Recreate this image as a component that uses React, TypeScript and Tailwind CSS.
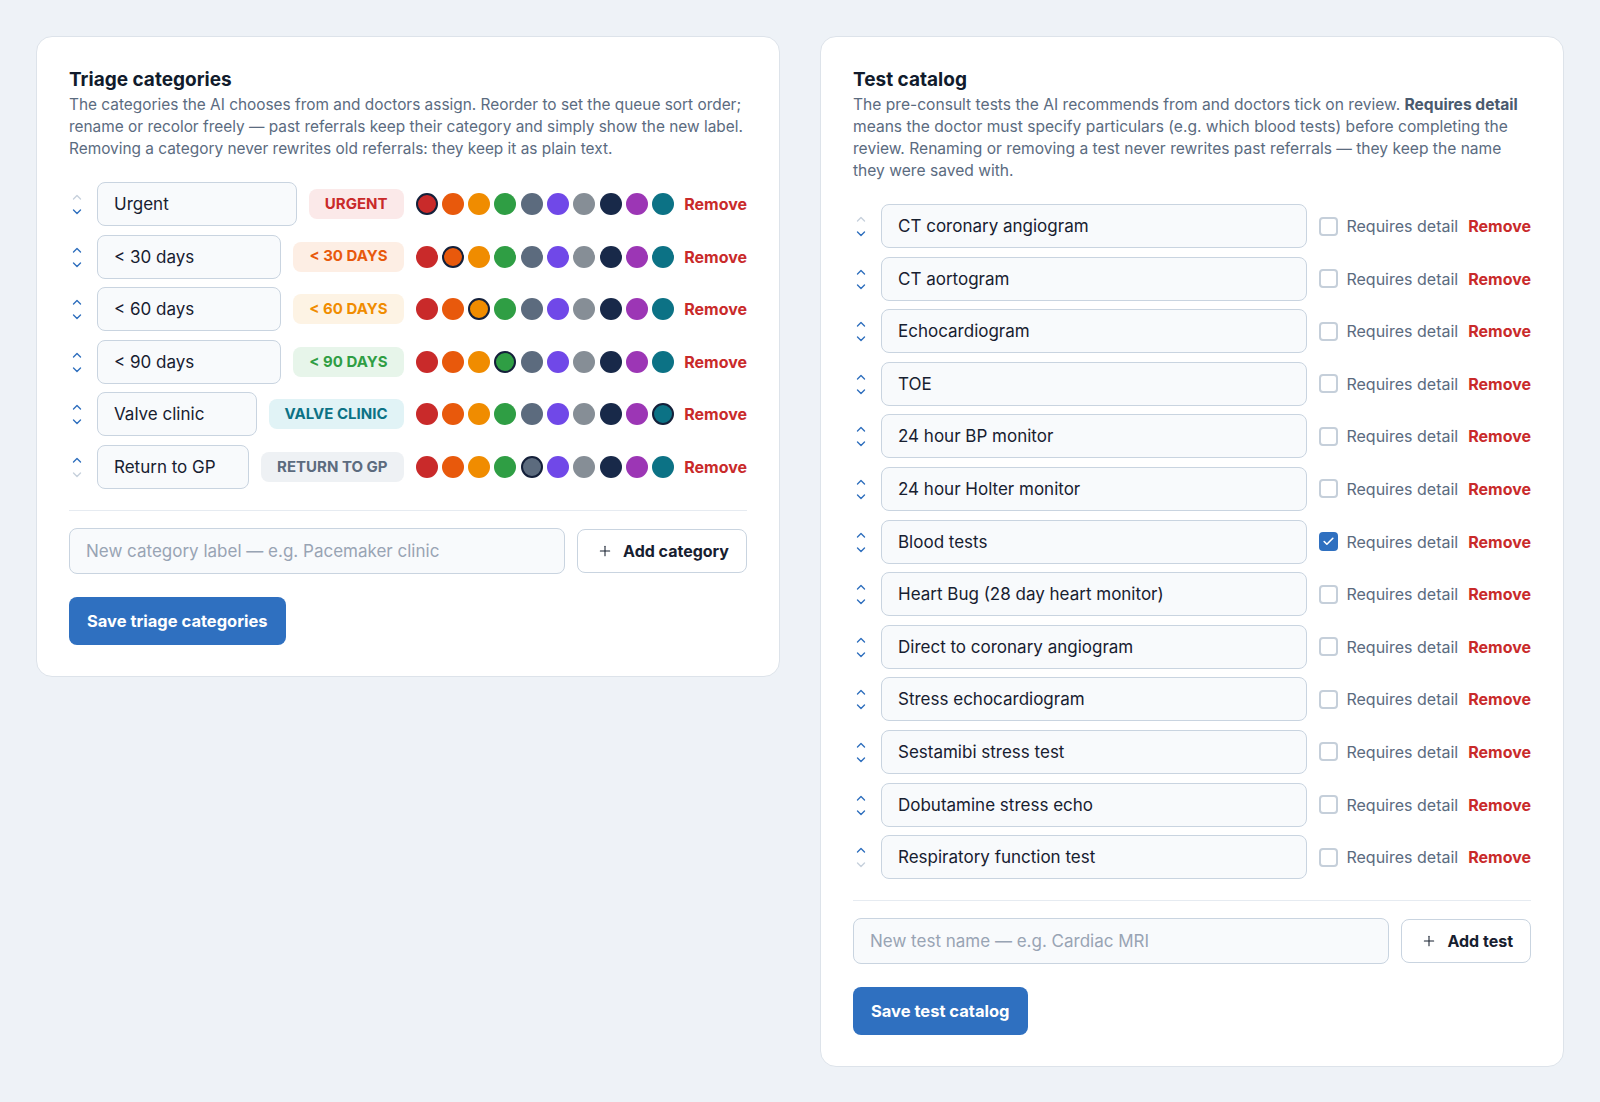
import { Plus, Check } from 'lucide-react';

const DOTS = [
  '#c92a2a',
  '#e8590c',
  '#f08c00',
  '#2f9e44',
  '#5c6b7e',
  '#7048e8',
  '#868e96',
  '#182949',
  '#9c36b5',
  '#0c7285',
];

type Category = {
  label: string;
  bg: string;
  fg: string;
  color: number;
};

const categories: Category[] = [
  { label: 'Urgent', bg: 'bg-[#fbe9e9]', fg: 'text-[#c92a2a]', color: 0 },
  { label: '< 30 days', bg: 'bg-[#fdeee4]', fg: 'text-[#e8590c]', color: 1 },
  { label: '< 60 days', bg: 'bg-[#fdf3e4]', fg: 'text-[#f08c00]', color: 2 },
  { label: '< 90 days', bg: 'bg-[#e7f5ea]', fg: 'text-[#2f9e44]', color: 3 },
  { label: 'Valve clinic', bg: 'bg-[#e1f3f6]', fg: 'text-[#0c7285]', color: 9 },
  { label: 'Return to GP', bg: 'bg-[#eef1f4]', fg: 'text-[#5c6b7e]', color: 4 },
];

const tests = [
  'CT coronary angiogram',
  'CT aortogram',
  'Echocardiogram',
  'TOE',
  '24 hour BP monitor',
  '24 hour Holter monitor',
  'Blood tests',
  'Heart Bug (28 day heart monitor)',
  'Direct to coronary angiogram',
  'Stress echocardiogram',
  'Sestamibi stress test',
  'Dobutamine stress echo',
  'Respiratory function test',
];

function Chevron({ up, disabled }: { up?: boolean; disabled?: boolean }) {
  return (
    <svg
      width="10"
      height="6"
      viewBox="0 0 10 6"
      fill="none"
      className={disabled ? 'text-[#c7d1dc]' : 'text-[#2f6fbe]'}
    >
      <path
        d={up ? 'M1.5 5 L5 1.5 L8.5 5' : 'M1.5 1 L5 4.5 L8.5 1'}
        stroke="currentColor"
        strokeWidth="1.4"
        strokeLinecap="round"
        strokeLinejoin="round"
      />
    </svg>
  );
}

function MoveArrows({ first, last }: { first?: boolean; last?: boolean }) {
  return (
    <div className="flex w-4 shrink-0 flex-col items-center gap-[9px] pt-[1px]">
      <button type="button" className="flex">
        <Chevron up disabled={first} />
      </button>
      <button type="button" className="flex">
        <Chevron disabled={last} />
      </button>
    </div>
  );
}

const inputCls =
  'h-[44px] min-w-0 flex-1 rounded-lg border border-[#c9d4e0] bg-[#f8fafc] px-4 text-[17px] text-[#172030] outline-none';

function AddRow({ placeholder, button }: { placeholder: string; button: string }) {
  return (
    <div className="mt-[21px] flex items-center gap-3 border-t border-[#e6ebf1] pt-[17px]">
      <input
        placeholder={placeholder}
        className="h-[46px] min-w-0 flex-1 rounded-lg border border-[#c9d4e0] bg-[#f8fafc] px-4 text-[17px] text-[#172030] outline-none placeholder:text-[#98a4b4]"
      />
      <button
        type="button"
        className="flex h-[44px] items-center gap-[10px] rounded-lg border border-[#c9d4e0] bg-white pl-[19px] pr-[17px] text-[16px] font-bold text-[#172030]"
      >
        <Plus className="h-4 w-4" strokeWidth={1.6} />
        {button}
      </button>
    </div>
  );
}

function SaveButton({ children }: { children: string }) {
  return (
    <button
      type="button"
      className="mt-[23px] h-[48px] rounded-lg bg-[#2f70c0] px-[18px] text-[16.5px] font-bold text-white"
    >
      {children}
    </button>
  );
}

function TriageCard() {
  return (
    <section className="rounded-2xl border border-[#dde3ea] bg-white px-8 pb-[31px] pt-[29px]">
      <h2 className="text-[19px] font-bold leading-[28px] text-[#111b2c]">Triage categories</h2>
      <p className="whitespace-nowrap text-[15.4px] leading-[22px] text-[#5b6b7f]">
        The categories the AI chooses from and doctors assign. Reorder to set the queue sort order;
        <br />
        rename or recolor freely — past referrals keep their category and simply show the new label.
        <br />
        Removing a category never rewrites old referrals: they keep it as plain text.
      </p>

      <div className="mt-[22px] flex flex-col gap-[8.6px]">
        {categories.map((c, i) => (
          <div key={c.label} className="flex items-center gap-3">
            <MoveArrows first={i === 0} last={i === categories.length - 1} />
            <input defaultValue={c.label} className={inputCls} />
            <span
              className={`flex h-[30px] shrink-0 items-center rounded-lg px-4 text-[15px] font-bold uppercase ${c.bg} ${c.fg}`}
            >
              {c.label}
            </span>
            <div className="flex shrink-0 items-center gap-[4.3px]">
              {DOTS.map((d, j) => (
                <span
                  key={d}
                  className={`h-[22px] w-[22px] rounded-full ${
                    j === c.color ? 'border-[2.5px] border-[#14203a]' : ''
                  }`}
                  style={{ backgroundColor: d }}
                />
              ))}
            </div>
            <button type="button" className="-ml-0.5 shrink-0 text-[16px] font-bold text-[#c92a2a]">
              Remove
            </button>
          </div>
        ))}
      </div>

      <AddRow placeholder="New category label — e.g. Pacemaker clinic" button="Add category" />
      <SaveButton>Save triage categories</SaveButton>
    </section>
  );
}

function TestCatalogCard() {
  return (
    <section className="rounded-2xl border border-[#dde3ea] bg-white px-8 pb-[31px] pt-[29px]">
      <h2 className="text-[19px] font-bold leading-[28px] text-[#111b2c]">Test catalog</h2>
      <p className="whitespace-nowrap text-[15.6px] leading-[22px] text-[#5b6b7f]">
        The pre-consult tests the AI recommends from and doctors tick on review.{' '}
        <strong className="font-bold text-[#4a5a6e]">Requires detail</strong>
        <br />
        means the doctor must specify particulars (e.g. which blood tests) before completing the
        <br />
        review. Renaming or removing a test never rewrites past referrals — they keep the name
        <br />
        they were saved with.
      </p>

      <div className="mt-[22px] flex flex-col gap-[8.6px]">
        {tests.map((t, i) => {
          const checked = t === 'Blood tests';
          return (
            <div key={t} className="flex items-center gap-3">
              <MoveArrows first={i === 0} last={i === tests.length - 1} />
              <input defaultValue={t} className={inputCls} />
              <label className="flex shrink-0 items-center gap-2 text-[16px] text-[#5b6b7f]">
                <span
                  className={`flex h-[19px] w-[19px] items-center justify-center rounded-[4px] ${
                    checked ? 'bg-[#2f70c0]' : 'border-2 border-[#c5cfda] bg-white'
                  }`}
                >
                  {checked && <Check className="h-[13px] w-[13px] text-white" strokeWidth={3} />}
                </span>
                Requires detail
              </label>
              <button type="button" className="-ml-0.5 shrink-0 text-[16px] font-bold text-[#c92a2a]">
                Remove
              </button>
            </div>
          );
        })}
      </div>

      <AddRow placeholder="New test name — e.g. Cardiac MRI" button="Add test" />
      <SaveButton>Save test catalog</SaveButton>
    </section>
  );
}

export default function App() {
  return (
    <div className="min-h-screen bg-[#eef2f7] p-9 font-['Inter',sans-serif]">
      <div className="grid grid-cols-2 items-start gap-10">
        <TriageCard />
        <TestCatalogCard />
      </div>
    </div>
  );
}
